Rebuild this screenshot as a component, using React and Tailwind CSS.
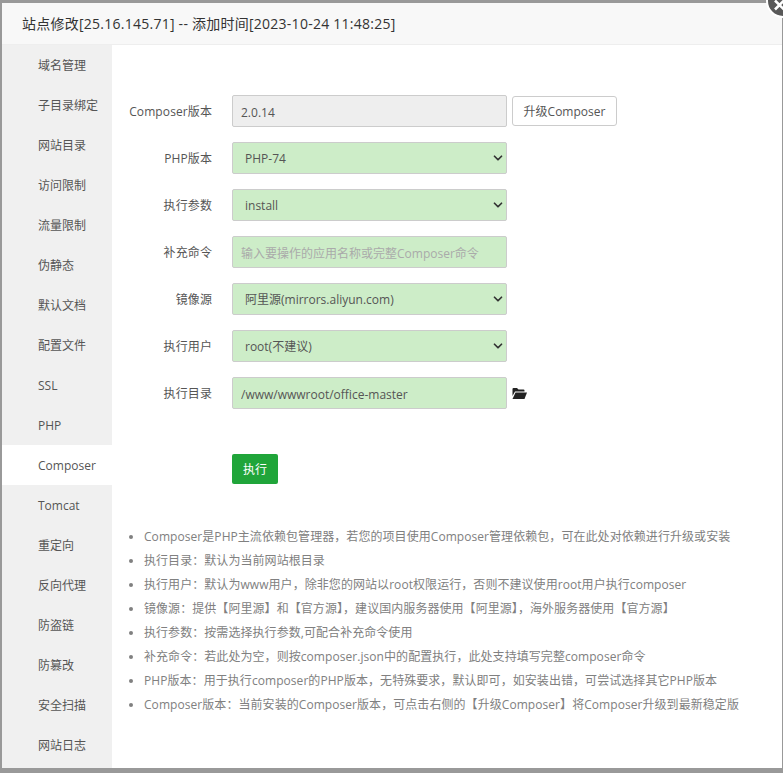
import React from "react";
import { ChevronDown } from "lucide-react";

const menuItems = [
  "域名管理",
  "子目录绑定",
  "网站目录",
  "访问限制",
  "流量限制",
  "伪静态",
  "默认文档",
  "配置文件",
  "SSL",
  "PHP",
  "Composer",
  "Tomcat",
  "重定向",
  "反向代理",
  "防盗链",
  "防篡改",
  "安全扫描",
  "网站日志",
];

const notes = [
  "Composer是PHP主流依赖包管理器，若您的项目使用Composer管理依赖包，可在此处对依赖进行升级或安装",
  "执行目录：默认为当前网站根目录",
  "执行用户：默认为www用户，除非您的网站以root权限运行，否则不建议使用root用户执行composer",
  "镜像源：提供【阿里源】和【官方源】，建议国内服务器使用【阿里源】，海外服务器使用【官方源】",
  "执行参数：按需选择执行参数,可配合补充命令使用",
  "补充命令：若此处为空，则按composer.json中的配置执行，此处支持填写完整composer命令",
  "PHP版本：用于执行composer的PHP版本，无特殊要求，默认即可，如安装出错，可尝试选择其它PHP版本",
  "Composer版本：当前安装的Composer版本，可点击右侧的【升级Composer】将Composer升级到最新稳定版",
];

const font = "font-['Open_Sans','Noto_Sans_CJK_SC',sans-serif]";

const Row = ({ label, children }) => (
  <div className="flex items-center h-8 mb-[15px]">
    <label className="w-[90px] mr-5 pt-[2px] text-right text-[12px] text-[#555] whitespace-nowrap tracking-[0.1px]">{label}</label>
    {children}
  </div>
);

const Select = ({ value }) => (
  <div className="relative w-[275px] h-8">
    <select
      defaultValue={value}
      className="appearance-none w-full h-8 pl-3 pt-[2px] bg-[#cdedc8] border border-[#ccc] rounded-[2px] text-[12px] text-[#555] outline-none"
    >
      <option>{value}</option>
    </select>
    <ChevronDown
      size={14}
      strokeWidth={3}
      className="absolute right-[2px] top-[9px] text-[#333] pointer-events-none"
    />
  </div>
);

const App = () => {
  return (
    <div className={`${font} h-[773px] bg-[#999] pt-[3px] pl-[2px] pr-[1px] pb-[5px] overflow-hidden`}>
      <div className="relative h-full bg-white flex flex-col">
        <div className="h-[42px] shrink-0 bg-[#f8f8f8] border-b border-[#eee] pl-5 flex items-center text-[14px] text-[#333] tracking-[0.25px]">
          站点修改[25.16.145.71] -- 添加时间[2023-10-24 11:48:25]
        </div>
        <button className="absolute -top-[19px] -right-[18px]">
          <svg width="34" height="34" viewBox="0 0 34 34" className="block">
            <circle cx="17" cy="17" r="16" fill="#595959" stroke="#fff" strokeWidth="2" />
            <path d="M9 16.5 L18 25.5 M18 16.5 L9 25.5" stroke="#fff" strokeWidth="2.6" />
          </svg>
        </button>

        <div className="flex flex-1 min-h-0">
          <ul className="w-[110px] shrink-0 bg-[#f0f0f0]">
            {menuItems.map((item) => (
              <li
                key={item}
                className={`h-10 pt-px leading-10 pl-9 text-[12px] text-[#555] ${item === "Composer" ? "bg-white" : ""}`}
              >
                {item}
              </li>
            ))}
          </ul>

          <div className="flex-1 pl-[10px] pt-[50px]">
            <Row label="Composer版本">
              <input
                readOnly
                value="2.0.14"
                className="w-[275px] h-8 pl-2 pt-[2px] bg-[#eee] border border-[#ccc] rounded-[2px] text-[12px] text-[#555] outline-none"
              />
              <button className="ml-[5px] h-[30px] w-[105px] pt-[2px] bg-white border border-[#ccc] rounded-[3px] text-[12px] text-[#555]">
                升级Composer
              </button>
            </Row>
            <Row label="PHP版本">
              <Select value="PHP-74" />
            </Row>
            <Row label="执行参数">
              <Select value="install" />
            </Row>
            <Row label="补充命令">
              <input
                placeholder="输入要操作的应用名称或完整Composer命令"
                className="w-[275px] h-8 pl-2 pt-[2px] bg-[#cdedc8] border border-[#ccc] rounded-[2px] text-[12px] text-[#555] outline-none placeholder:text-[#aaa]"
              />
            </Row>
            <Row label="镜像源">
              <Select value="阿里源(mirrors.aliyun.com)" />
            </Row>
            <Row label="执行用户">
              <Select value="root(不建议)" />
            </Row>
            <Row label="执行目录">
              <input
                readOnly
                value="/www/wwwroot/office-master"
                className="w-[275px] h-8 pl-2 pt-[2px] bg-[#cdedc8] border border-[#ccc] rounded-[2px] text-[12px] text-[#555] outline-none"
              />
              <svg width="15" height="11" viewBox="0 0 15 11" fill="#222" className="ml-[5px]">
                <path d="M0.5 8 V1 Q0.5 0 1.5 0 H5 L6.5 1.5 H11.5 Q12.5 1.5 12.5 2.5 V3.5 H3 L0.5 8Z" />
                <path d="M3.5 4.5 H15 L12.5 11 H0.5Z" />
              </svg>
            </Row>

            <button className="ml-[110px] mt-[30px] w-[46px] h-[30px] pt-[2px] bg-[#20a53a] rounded-[2px] text-[12px] text-white">
              执行
            </button>

            <ul className="mt-[41px] pl-[22px] list-disc text-[12px] leading-6 text-[#808080] tracking-[0.06px]">
              {notes.map((note) => (
                <li key={note} className="whitespace-nowrap">
                  {note}
                </li>
              ))}
            </ul>
          </div>
        </div>
      </div>
    </div>
  );
};

export default App;
